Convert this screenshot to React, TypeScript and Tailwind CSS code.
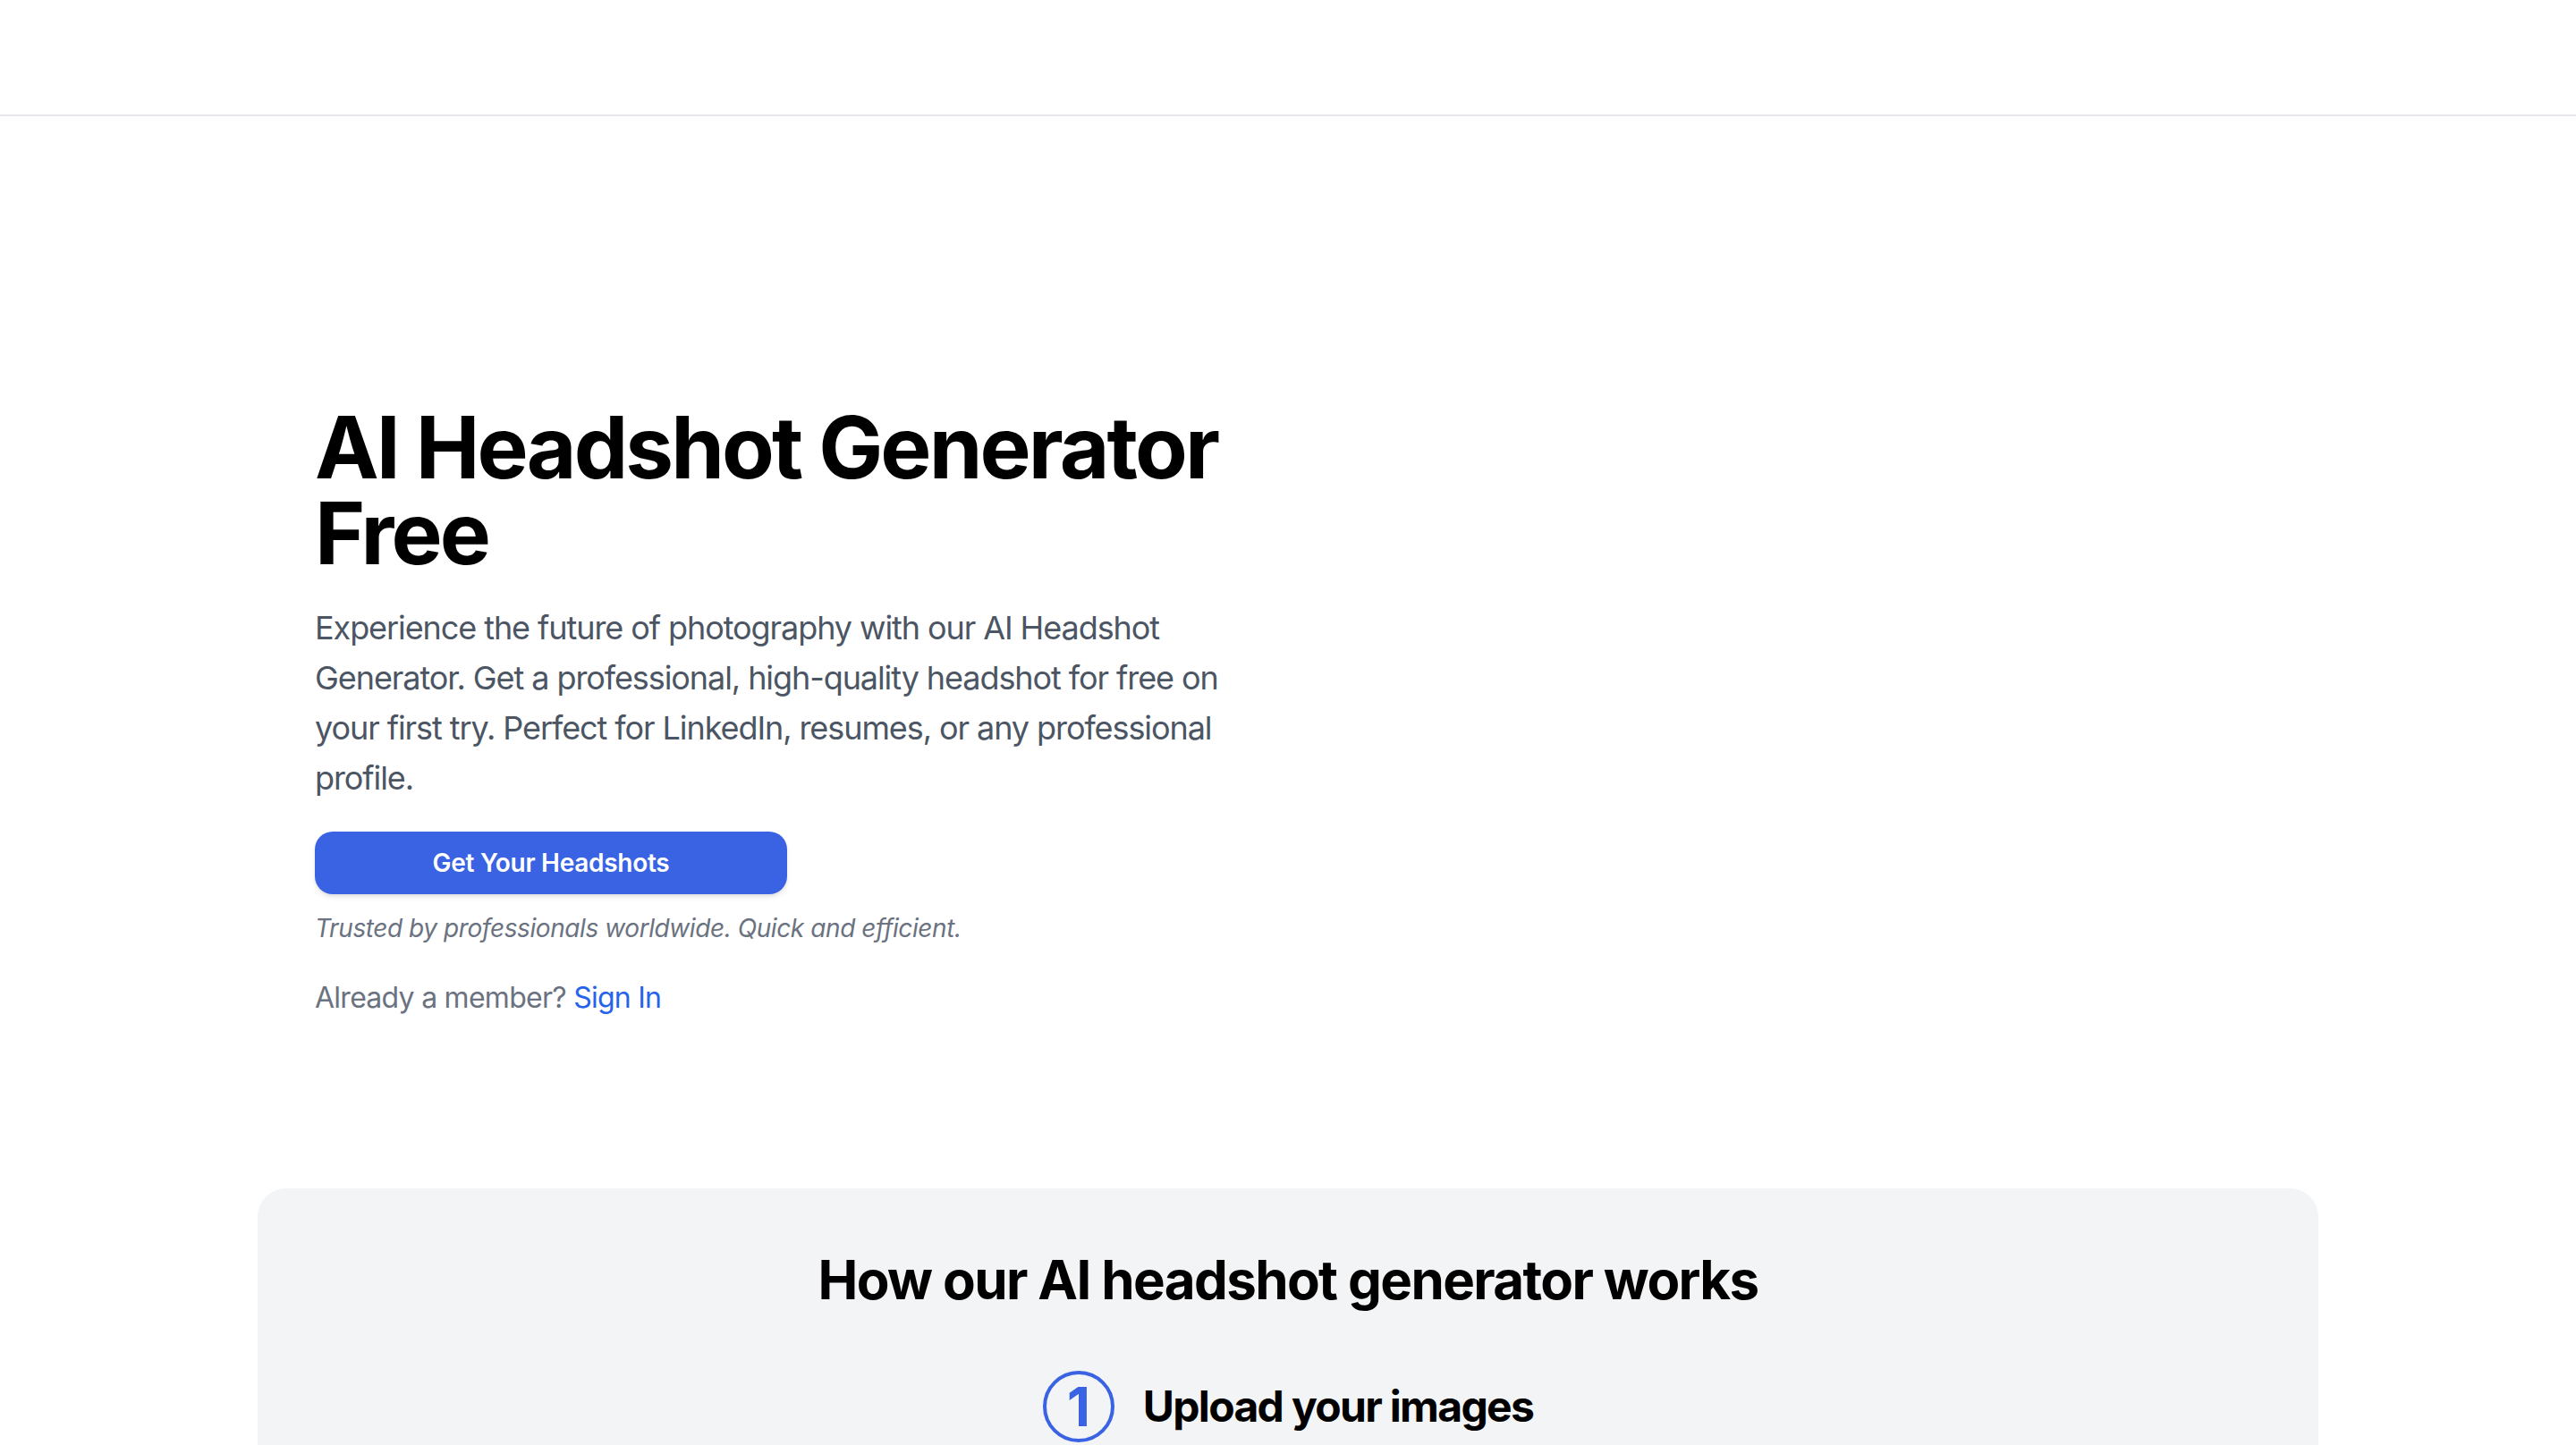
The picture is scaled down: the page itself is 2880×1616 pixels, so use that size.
export default function App() {
  return (
    <div className="min-h-screen bg-white font-['Inter','Liberation_Sans',sans-serif] text-black">
      {/* Header bar */}
      <header className="h-[130px] border-b-2 border-[#e5e7eb] bg-white" />

      <main>
        {/* Hero */}
        <section className="mx-auto max-w-[2304px] px-16 pt-[322px]">
          <div className="grid grid-cols-2 gap-16">
            <div>
              <h1 className="text-[96px] font-bold leading-[96px] tracking-[-0.03em] text-black">
                AI Headshot Generator Free
              </h1>
              <p className="mt-[30px] text-[36px] leading-[56px] tracking-[-0.03em] text-[#4b5563]">
                Experience the future of photography with our AI Headshot Generator. Get a
                professional, high-quality headshot for free on your first try. Perfect for
                LinkedIn, resumes, or any professional profile.
              </p>
              <button className="mt-[32px] flex h-[70px] w-1/2 items-center justify-center rounded-[20px] bg-[#3a63e3] text-[28px] font-semibold tracking-[-0.01em] text-white shadow-md">
                Get Your Headshots
              </button>
              <p className="mt-[18px] text-[28px] italic leading-[40px] tracking-[-0.015em] text-[#6b7280]">
                Trusted by professionals worldwide. Quick and efficient.
              </p>
              <p className="mt-[34px] text-[32px] leading-[48px] tracking-[-0.023em] text-[#6b7280]">
                Already a member?{" "}
                <a href="#" className="text-[#2563eb]">
                  Sign In
                </a>
              </p>
            </div>
            <div />
          </div>
        </section>

        {/* How it works */}
        <section className="mx-auto mt-[189px] max-w-[2304px] rounded-t-[32px] bg-[#f3f4f6] px-16 pb-[200px] pt-[66px]">
          <h2 className="text-center text-[60px] font-bold leading-[72px] tracking-[-0.027em] text-black">
            How our AI headshot generator works
          </h2>
          <div className="mt-[66px] flex items-center justify-center gap-[32px]">
            <div className="flex h-[80px] w-[80px] items-center justify-center rounded-full border-4 border-[#3a63e3] text-[60px] font-bold leading-none text-[#3a63e3]">
              1
            </div>
            <h3 className="text-[48px] font-bold leading-[64px] tracking-[-0.035em] text-black">
              Upload your images
            </h3>
          </div>
        </section>
      </main>
    </div>
  )
}
